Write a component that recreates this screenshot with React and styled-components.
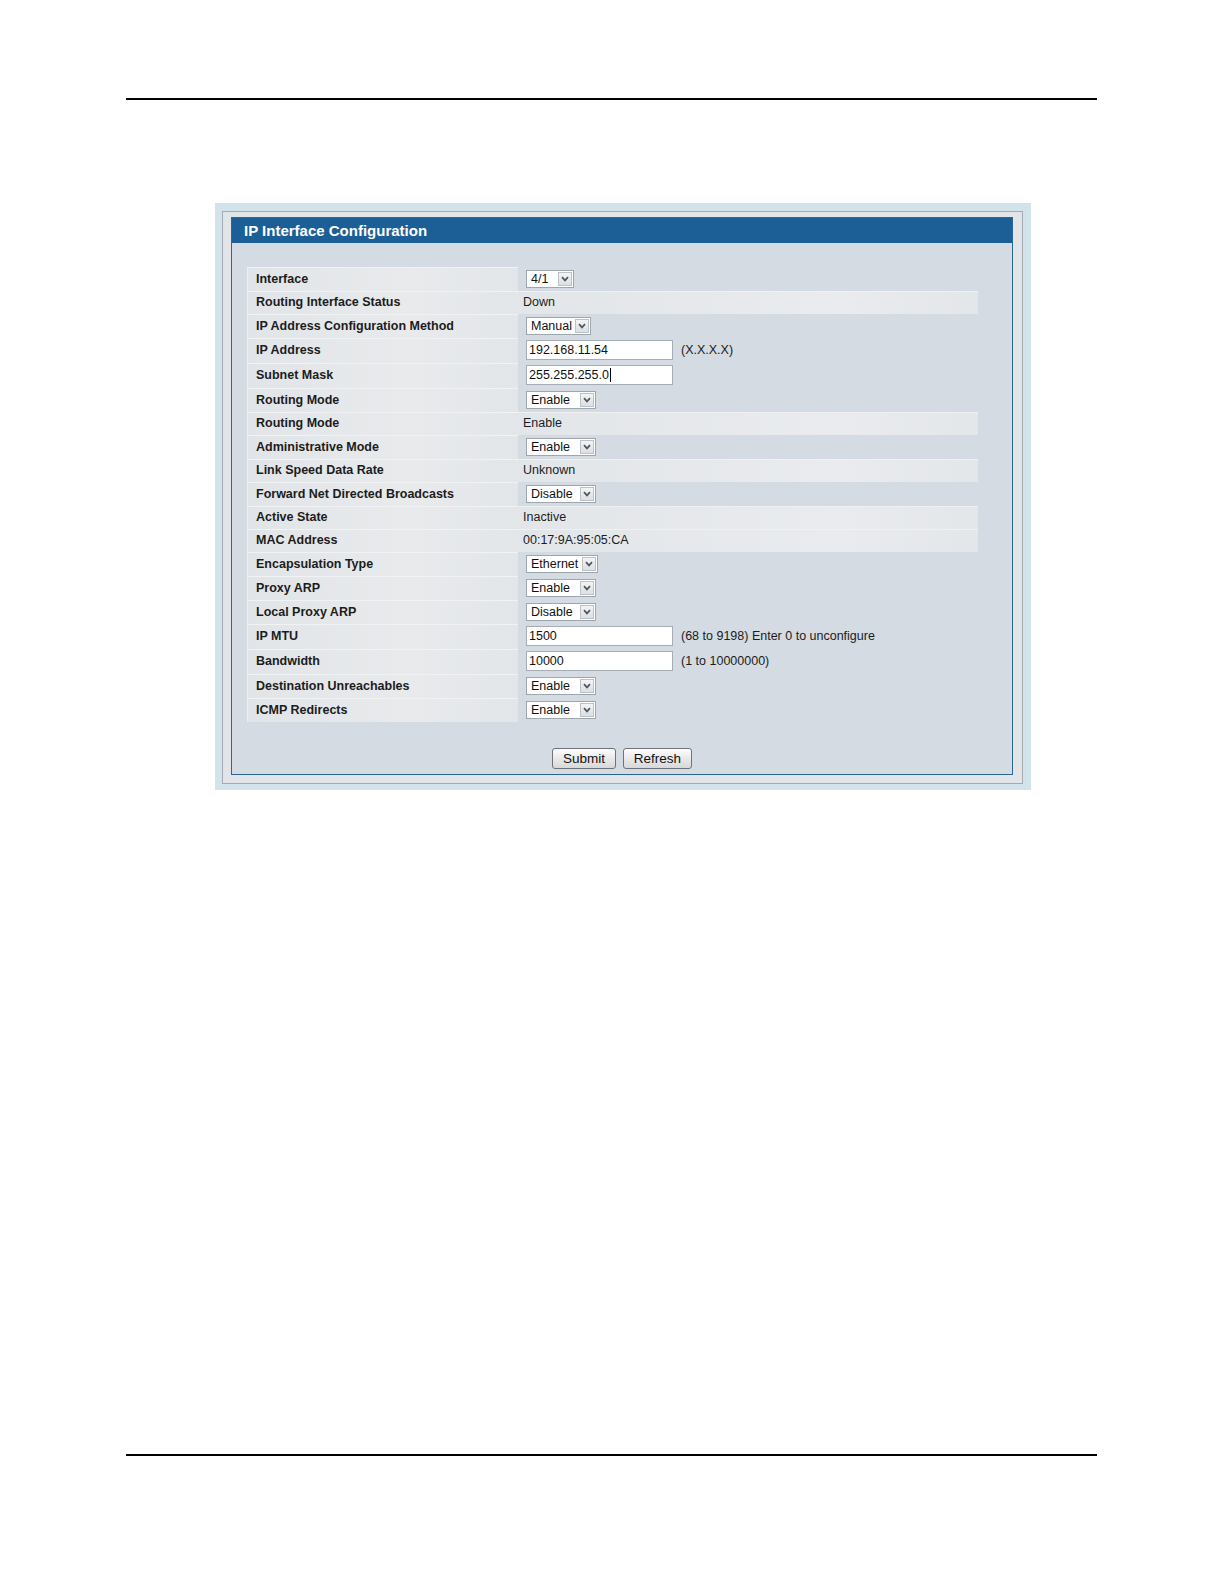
import React from 'react';
import styled, { createGlobalStyle } from 'styled-components';

const GlobalStyle = createGlobalStyle`
  html, body {
    margin: 0;
    padding: 0;
    background: #ffffff;
  }
  body {
    font-family: "Liberation Sans", Arial, sans-serif;
    color: #1a1a1a;
  }
`;

const Page = styled.div`
  width: 1224px;
  min-height: 1584px;
  display: flex;
  flex-direction: column;
  box-sizing: border-box;
  padding: 98px 0 128px;
`;

const Rule = styled.div`
  height: 2px;
  margin: 0 127px 0 126px;
  background: #000000;
`;

const Spacer = styled.div`
  flex: 1;
`;

const Frame = styled.div`
  width: 816px;
  margin: 103px 0 0 215px;
  box-sizing: border-box;
  background: #d3e3ea;
  padding: 8px 8px 6px 7px;
`;

const Inset = styled.div`
  border: 1px solid #a3aab1;
  background: #e1e5e8;
  padding: 5px 9px 8px 8px;
`;

const Panel = styled.div`
  border: 1px solid #2c6699;
  background: #d4dbe2;
  display: flex;
  flex-direction: column;
`;

const Header = styled.div`
  background: #1c5e96;
  height: 25px;
  display: flex;
  align-items: center;
  padding-left: 12px;
  color: #ffffff;
  font-weight: bold;
  font-size: 15px;
`;

const Table = styled.div`
  width: 731px;
  margin: 24px 0 0 15px;
  display: flex;
  flex-direction: column;
`;

const Row = styled.div`
  display: grid;
  grid-template-columns: 271px 1fr;
  height: ${p => p.h}px;
`;

const Label = styled.div`
  display: flex;
  align-items: center;
  padding-left: 8px;
  font-size: 12.5px;
  font-weight: bold;
  color: #1c1c1c;
  background: linear-gradient(to right, #e2e5e8, #e8eaec 60%, #e3e6e9);
  border-top: 1px solid #f1f2f3;
  border-left: 1px solid #eceef0;
  padding-bottom: 2px;
`;

const Value = styled.div`
  display: flex;
  align-items: center;
  gap: 8px;
  padding-left: ${p => (p.plain ? 5 : 8)}px;
  font-size: 12.5px;
  color: #1c1c1c;
  background: ${p => (p.plain
    ? 'linear-gradient(to right, #e3e6e9, #e9ebee 70%, #e4e7ea)'
    : 'transparent')};
  border-top: 1px solid ${p => (p.plain ? '#eef0f2' : 'transparent')};
  padding-bottom: 2px;
`;

const SelectBox = styled.div`
  display: flex;
  align-items: center;
  justify-content: space-between;
  width: ${p => p.w}px;
  height: 18px;
  box-sizing: border-box;
  border: 1px solid #9ea6ae;
  background: #ffffff;
  padding: 0 1px 0 4px;
  font-size: 12.5px;
  color: #111111;
`;

const Arrow = styled.span`
  width: 14px;
  height: 14px;
  box-sizing: border-box;
  border: 1px solid #bcc2c8;
  background: linear-gradient(#f3f4f5, #dcdfe3);
  display: flex;
  align-items: center;
  justify-content: center;
`;

const TextInput = styled.div`
  width: 147px;
  height: 20px;
  box-sizing: border-box;
  border: 1px solid #a6adb4;
  background: #ffffff;
  display: flex;
  align-items: center;
  padding-left: 2px;
  font-size: 12.5px;
  color: #111111;
`;

const Caret = styled.span`
  display: inline-block;
  width: 1px;
  height: 14px;
  background: #000000;
  margin-left: 1px;
`;

const Hint = styled.span`
  font-size: 12.5px;
  color: #1c1c1c;
`;

const Buttons = styled.div`
  display: flex;
  justify-content: center;
  gap: 7px;
  margin: 26px 0 5px;
`;

const Button = styled.button`
  height: 21px;
  width: ${p => p.w}px;
  padding: 0;
  border: 1px solid #6f7378;
  border-radius: 3px;
  background: linear-gradient(#fdfdfd, #e9e9e9 50%, #d8d8d8);
  font-family: "Liberation Sans", Arial, sans-serif;
  font-size: 13.5px;
  color: #111111;
`;

function Chevron() {
  return (
    <svg width="8" height="6" viewBox="0 0 8 6">
      <path d="M1 1.2 L4 4.4 L7 1.2" fill="none" stroke="#4d5862" strokeWidth="1.7" />
    </svg>
  );
}

function Select(props) {
  return (
    <SelectBox w={props.w}>
      <span>{props.value}</span>
      <Arrow><Chevron /></Arrow>
    </SelectBox>
  );
}

const rows = [
  { label: 'Interface', select: '4/1', w: 48 },
  { label: 'Routing Interface Status', text: 'Down' },
  { label: 'IP Address Configuration Method', select: 'Manual', w: 65 },
  { label: 'IP Address', input: '192.168.11.54', hint: '(X.X.X.X)' },
  { label: 'Subnet Mask', input: '255.255.255.0', caret: true },
  { label: 'Routing Mode', select: 'Enable', w: 70 },
  { label: 'Routing Mode', text: 'Enable' },
  { label: 'Administrative Mode', select: 'Enable', w: 70 },
  { label: 'Link Speed Data Rate', text: 'Unknown' },
  { label: 'Forward Net Directed Broadcasts', select: 'Disable', w: 70 },
  { label: 'Active State', text: 'Inactive' },
  { label: 'MAC Address', text: '00:17:9A:95:05:CA' },
  { label: 'Encapsulation Type', select: 'Ethernet', w: 72 },
  { label: 'Proxy ARP', select: 'Enable', w: 70 },
  { label: 'Local Proxy ARP', select: 'Disable', w: 70 },
  { label: 'IP MTU', input: '1500', hint: '(68 to 9198) Enter 0 to unconfigure' },
  { label: 'Bandwidth', input: '10000', hint: '(1 to 10000000)' },
  { label: 'Destination Unreachables', select: 'Enable', w: 70 },
  { label: 'ICMP Redirects', select: 'Enable', w: 70 },
];

function FieldValue({ row }) {
  if (row.text) {
    return <Value plain>{row.text}</Value>;
  }
  if (row.select) {
    return (
      <Value>
        <Select value={row.select} w={row.w} />
      </Value>
    );
  }
  return (
    <Value>
      <TextInput>
        {row.input}
        {row.caret && <Caret />}
      </TextInput>
      {row.hint && <Hint>{row.hint}</Hint>}
    </Value>
  );
}

export default function App() {
  return (
    <Page>
      <GlobalStyle />
      <Rule />
      <Frame>
        <Inset>
          <Panel>
            <Header>IP Interface Configuration</Header>
            <Table>
              {rows.map((row, i) => (
                <Row key={i} h={row.input ? 25 : row.text ? 23 : 24}>
                  <Label>{row.label}</Label>
                  <FieldValue row={row} />
                </Row>
              ))}
            </Table>
            <Buttons>
              <Button w={64}>Submit</Button>
              <Button w={69}>Refresh</Button>
            </Buttons>
          </Panel>
        </Inset>
      </Frame>
      <Spacer />
      <Rule />
    </Page>
  );
}
